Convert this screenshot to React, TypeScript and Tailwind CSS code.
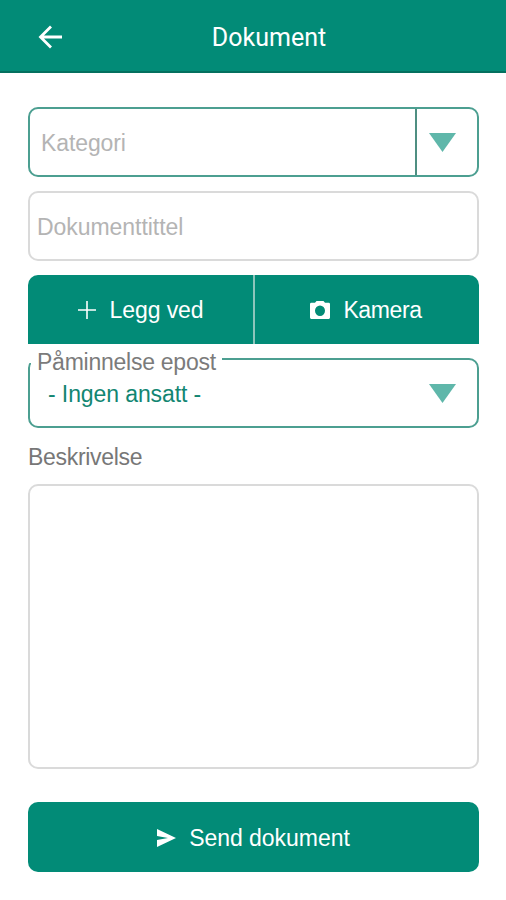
import { useState } from "react";

function CaretDown() {
  return (
    <svg width="27" height="19" viewBox="0 0 27 19" className="fill-[#5fb7aa]">
      <path d="M0 0H27L13.5 19Z" />
    </svg>
  );
}

export default function App() {
  const [category, setCategory] = useState("");
  const [title, setTitle] = useState("");
  const [description, setDescription] = useState("");

  return (
    <div className="w-full h-[900px] bg-white font-['Liberation_Sans',Arial,sans-serif] text-[23px] leading-[28px]">
      <header className="grid grid-cols-[90px_1fr_58px] items-center h-[73px] bg-[#028b77] border-b-2 border-[#04705f] text-white">
        <button type="button" aria-label="Tilbake" className="pl-[38px] pt-[3px]">
          <svg width="25" height="24" viewBox="0 0 25 24" fill="none" stroke="currentColor" strokeWidth="2.8">
            <path d="M24 12H3M13 1.5L2.5 12L13 22.5" />
          </svg>
        </button>
        <h1 className="pt-[4px] text-center font-['Roboto',sans-serif] text-[25px]">Dokument</h1>
      </header>

      <form className="flex flex-col pl-[28px] pr-[27px] pt-[34px]" onSubmit={(e) => e.preventDefault()}>
        <div className="flex h-[70px] border-2 border-[#4c9f91] rounded-[10px]">
          <input type="text" placeholder="Kategori" value={category} onChange={(e) => setCategory(e.target.value)} className="flex-1 min-w-0 pl-[11px] pt-[2px] outline-none tracking-[-0.1px] text-[#008b76] placeholder:text-[#b4b4b4]" />
          <button type="button" aria-label="Velg kategori" className="flex items-center w-[62px] pl-[12px] border-l-2 border-[#4f8f82]">
            <CaretDown />
          </button>
        </div>

        <input type="text" placeholder="Dokumenttittel" value={title} onChange={(e) => setTitle(e.target.value)} className="h-[70px] mt-[14px] pl-[7px] pt-[2px] border-2 border-[#dadada] rounded-[10px] outline-none tracking-[-0.05px] text-[#666] placeholder:text-[#b4b4b4]" />

        <div className="flex h-[69px] mt-[14px] rounded-t-[10px] overflow-hidden bg-[#028b77] text-white">
          <button type="button" className="flex items-center justify-center w-[227px] pt-px border-r-2 border-[#8dc5bb] tracking-[-0.1px]">
            <svg width="18" height="18" viewBox="0 0 18 18" stroke="currentColor" strokeWidth="1.6" className="mr-[14px]">
              <path d="M9 0V18M0 9H18" />
            </svg>
            Legg ved
          </button>
          <button type="button" className="flex items-center justify-center flex-1 pt-px pr-[2px] tracking-[-0.4px]">
            <svg width="20" height="18" viewBox="0 0 20 18" fill="currentColor" className="mr-[13px]">
              <path fillRule="evenodd" d="M6.500 0H13.500L15 1.800H18.700Q20 1.800 20 3.200V16.600Q20 18 18.700 18H1.300Q0 18 0 16.600V3.200Q0 1.800 1.300 1.800H5ZM10 4.600A5 5.200 0 1 0 10 15A5 5.200 0 1 0 10 4.600Z" />
            </svg>
            Kamera
          </button>
        </div>

        <div className="relative flex items-center h-[70px] mt-[14px] pl-[18px] pr-[21px] border-2 border-[#4c9f91] rounded-[10px]">
          {/* floating label sits over the top border and hides the corner */}
          <label className="absolute left-px -top-[11px] pl-[6px] pr-[6px] h-[24px] leading-[27px] tracking-[-0.25px] whitespace-nowrap bg-white text-[#7b7b7b] before:absolute before:-left-[4px] before:top-0 before:w-[5px] before:h-[14px] before:bg-white">Påminnelse epost</label>
          <span className="flex-1 pt-[2px] tracking-[-0.1px] text-[#128672]">- Ingen ansatt -</span>
          <CaretDown />
        </div>

        <label className="mt-[15px] tracking-[-0.3px] text-[#777]">Beskrivelse</label>
        <textarea value={description} onChange={(e) => setDescription(e.target.value)} className="h-[285px] mt-[13px] p-2 border-2 border-[#dadada] rounded-[10px] outline-none resize-none text-[#666]" />

        <button type="submit" className="flex items-center justify-center h-[70px] mt-[33px] pt-[2px] rounded-[10px] bg-[#028b77] text-white tracking-[-0.05px]">
          <svg width="19" height="18" viewBox="0 0 19 18" fill="currentColor" className="mr-[13px]">
            <path d="M0 0L19 9L0 18V11L11 9L0 7Z" />
          </svg>
          Send dokument
        </button>
      </form>
    </div>
  );
}
